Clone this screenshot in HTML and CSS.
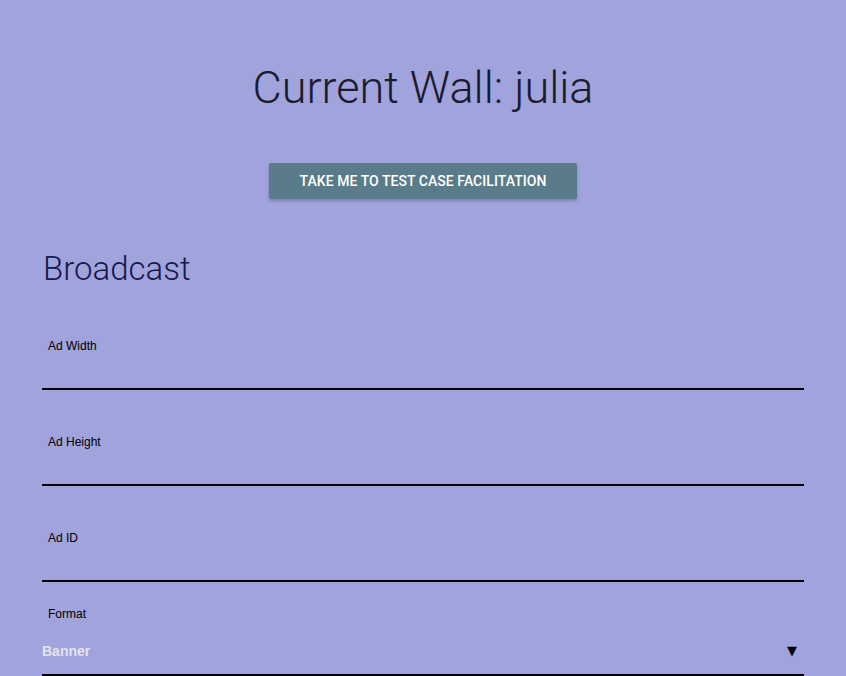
FILE: index.html
```html
<!DOCTYPE html>
<html>
<head>
<meta charset="utf-8">
<link rel="stylesheet" href="styles.css">
</head>
<body>
<div class="page">
  <h1 class="title">Current Wall: julia</h1>
  <div class="btn-row">
    <button class="btn">Take me to test case facilitation</button>
  </div>
  <h2 class="section">Broadcast</h2>
  <form class="form">
    <div class="field">
      <label class="label">Ad Width</label>
      <div class="input"></div>
    </div>
    <div class="field">
      <label class="label">Ad Height</label>
      <div class="input"></div>
    </div>
    <div class="field">
      <label class="label">Ad ID</label>
      <div class="input"></div>
    </div>
    <div class="field field-select">
      <label class="label">Format</label>
      <div class="select">
        <span class="select-value">Banner</span>
        <span class="select-arrow">&#9660;</span>
      </div>
    </div>
  </form>
</div>
</body>
</html>
```
FILE: styles.css
```css
html, body {
  margin: 0;
  padding: 0;
  background: #a0a3dc;
  height: 100%;
  overflow: hidden;
}
.page {
  padding: 0 42px;
  font-family: Roboto, "Liberation Sans", sans-serif;
}
.title {
  margin: 0;
  padding-top: 62px;
  text-align: center;
  font-size: 45px;
  font-weight: 300;
  line-height: 52px;
  color: #1b1b2e;
}
.btn-row {
  display: flex;
  justify-content: center;
  margin-top: 49px;
}
.btn {
  width: 308px;
  height: 36px;
  border: none;
  border-radius: 2px;
  background: #5a7b89;
  color: #fff;
  font-family: Roboto, sans-serif;
  font-weight: 500;
  font-size: 14px;
  letter-spacing: 0.05px;
  text-transform: uppercase;
  box-shadow: 0 2px 3px rgba(0,0,0,0.22);
  padding: 0;
}
.section {
  margin: 50px 0 0 1px;
  font-size: 33px;
  font-weight: 300;
  line-height: 40px;
  color: #18184a;
}
.form {
  margin-top: 10px;
}
.field {
  padding-top: 45px;
  border-bottom: 2px solid #000;
}
.field:first-child {
  padding-top: 40px;
}
.label {
  display: block;
  margin-left: 6px;
  font-family: "Liberation Sans", Arial, sans-serif;
  font-size: 12px;
  line-height: 14px;
  color: #000;
}
.input {
  height: 35px;
}
.field-select {
  padding-top: 25px;
}
.select {
  height: 53px;
  display: flex;
  align-items: flex-end;
  justify-content: space-between;
  padding-bottom: 15px;
  box-sizing: border-box;
}
.select-value {
  font-family: "Liberation Sans", Arial, sans-serif;
  font-weight: 700;
  font-size: 14px;
  color: #e4e4ef;
  line-height: 16px;
}
.select-arrow {
  font-family: "DejaVu Sans", sans-serif;
  font-size: 13px;
  line-height: 16px;
  color: #000;
  margin-right: 7px;
}
```
